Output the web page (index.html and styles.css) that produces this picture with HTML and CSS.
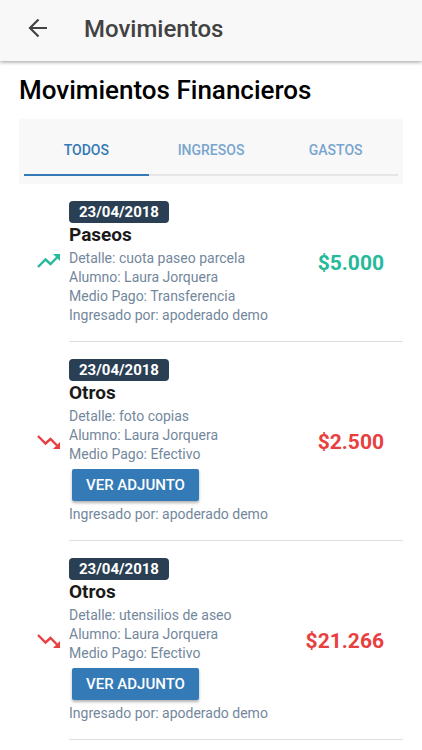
FILE: index.html
```html
<!DOCTYPE html>
<html lang="es">
<head>
    <meta charset="UTF-8">
    <meta name="viewport" content="width=device-width, initial-scale=1.0">
    <title>Movimientos</title>
    <link rel="stylesheet" href="styles.css">
</head>
<body>
    <header class="toolbar">
        <button class="back-btn" type="button" aria-label="Volver">
            <svg viewBox="0 0 20 20" width="20" height="20">
                <path d="M19 9H3M10.500 0.500L2 9l8.500 8.500" fill="none" stroke="currentColor" stroke-width="2.200"/>
            </svg>
        </button>
        <div class="toolbar-title">Movimientos</div>
    </header>

    <main class="content">
        <h1>Movimientos Financieros</h1>

        <nav class="segment">
            <button class="segment-btn active" type="button">TODOS</button>
            <button class="segment-btn" type="button">INGRESOS</button>
            <button class="segment-btn" type="button">GASTOS</button>
        </nav>

        <ul class="list">
            <li class="item income">
                <svg class="trend" viewBox="0 0 24 18" width="24" height="18">
                    <path d="M1 13l7.500-7.500 5 4.500 6.500-6.500" fill="none" stroke="currentColor" stroke-width="2.400"/>
                    <path d="M16 0h7v7z" fill="currentColor"/>
                </svg>
                <div class="item-body">
                    <div class="info">
                        <span class="badge">23/04/2018</span>
                        <h2>Paseos</h2>
                        <p>Detalle: cuota paseo parcela</p>
                        <p>Alumno: Laura Jorquera</p>
                        <p>Medio Pago: Transferencia</p>
                        <p>Ingresado por: apoderado demo</p>
                    </div>
                    <div class="amount">$5.000</div>
                </div>
            </li>
            <li class="item expense">
                <svg class="trend" viewBox="0 0 24 14" width="24" height="14">
                    <path d="M1 1l7.500 7.500 5-4.500 6.500 6.500" fill="none" stroke="currentColor" stroke-width="2.400"/>
                    <path d="M16 14h7V7z" fill="currentColor"/>
                </svg>
                <div class="item-body">
                    <div class="info">
                        <span class="badge">23/04/2018</span>
                        <h2>Otros</h2>
                        <p>Detalle: foto copias</p>
                        <p>Alumno: Laura Jorquera</p>
                        <p>Medio Pago: Efectivo</p>
                        <button class="attach-btn" type="button">VER ADJUNTO</button>
                        <p>Ingresado por: apoderado demo</p>
                    </div>
                    <div class="amount">$2.500</div>
                </div>
            </li>
            <li class="item expense">
                <svg class="trend" viewBox="0 0 24 14" width="24" height="14">
                    <path d="M1 1l7.500 7.500 5-4.500 6.500 6.500" fill="none" stroke="currentColor" stroke-width="2.400"/>
                    <path d="M16 14h7V7z" fill="currentColor"/>
                </svg>
                <div class="item-body">
                    <div class="info">
                        <span class="badge">23/04/2018</span>
                        <h2>Otros</h2>
                        <p>Detalle: utensilios de aseo</p>
                        <p>Alumno: Laura Jorquera</p>
                        <p>Medio Pago: Efectivo</p>
                        <button class="attach-btn" type="button">VER ADJUNTO</button>
                        <p>Ingresado por: apoderado demo</p>
                    </div>
                    <div class="amount">$21.266</div>
                </div>
            </li>
        </ul>
    </main>
</body>
</html>
```
FILE: styles.css
```css
* {
    margin: 0;
    padding: 0;
    box-sizing: border-box;
}

body {
    font-family: Roboto, 'Liberation Sans', sans-serif;
    background: #fff;
    color: #000;
}

button {
    font-family: inherit;
    border: none;
    background: none;
    cursor: pointer;
}

.toolbar {
    display: flex;
    align-items: center;
    gap: 36px;
    padding: 14px 28px 17px;
    background: #f8f8f8;
    box-shadow: 0 1px 4px rgba(0, 0, 0, 0.4);
}

.back-btn {
    display: flex;
    color: #424242;
}

.toolbar-title {
    font-size: 24px;
    line-height: 30px;
    font-weight: 500;
    color: #424242;
}

.content {
    padding: 12px 19px 0;
}

h1 {
    font-size: 26px;
    line-height: 34px;
    font-weight: 500;
    margin-bottom: 12px;
}

.segment {
    display: flex;
    background: #f8f8f8;
    padding: 6px 5px 8px;
}

.segment-btn {
    flex: 1;
    height: 51px;
    font-size: 14px;
    font-weight: 500;
    color: #78a5cf;
    border-bottom: 2px solid #e6e6e6;
}

.segment-btn.active {
    color: #3579b7;
    border-bottom-color: #3579b7;
}

.list {
    list-style: none;
}

.item {
    display: flex;
    align-items: center;
    gap: 8px;
    padding-left: 18px;
}

.trend {
    flex: none;
}

.item-body {
    flex: 1;
    display: flex;
    align-items: center;
    justify-content: space-between;
    padding: 17px 19px 16px 0;
    border-bottom: 1px solid #dedede;
}

.badge {
    display: block;
    width: fit-content;
    padding: 0 10px;
    font-size: 15px;
    line-height: 22px;
    font-weight: 700;
    color: #fff;
    background: #2a3f54;
    border-radius: 4px;
}

h2 {
    font-size: 19px;
    line-height: 24px;
    font-weight: 700;
    color: #1a1a1a;
    margin-bottom: 2px;
}

.info p {
    font-size: 14px;
    line-height: 19px;
    color: #73879c;
}

.attach-btn {
    display: block;
    height: 32px;
    margin: 5px 3px 4px;
    padding: 0 14px;
    font-size: 15px;
    font-weight: 500;
    color: #fff;
    background: #337ab7;
    border-radius: 2px;
    box-shadow: 0 2px 3px rgba(0, 0, 0, 0.3);
}

.amount {
    font-size: 21px;
    line-height: 24px;
    font-weight: 700;
}

.income .trend,
.income .amount {
    color: #26b99a;
}

.expense .trend,
.expense .amount {
    color: #e84040;
}
```
